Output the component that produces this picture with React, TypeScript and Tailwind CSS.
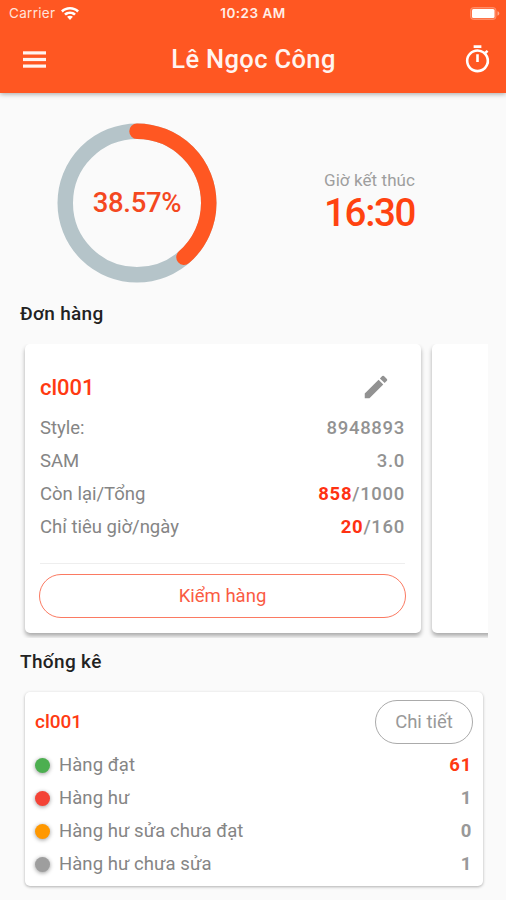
import React from "react";
import { MdOutlineTimer, MdEdit } from "react-icons/md";

interface FilaProps {
  label: string;
  children: React.ReactNode;
}

const Fila: React.FC<FilaProps> = ({ label, children }) => (
  <div className="flex h-[33px] items-center justify-between text-[18.5px]">
    <span className="text-[#858585]">{label}</span>
    <span className="font-medium tracking-[0.7px] text-[#929292]">{children}</span>
  </div>
);

const stats = [
  { label: "Hàng đạt", value: 61, dot: "bg-[#4caf50]", color: "text-[#ff3a12]" },
  { label: "Hàng hư", value: 1, dot: "bg-[#f44336]", color: "text-[#999999]" },
  { label: "Hàng hư sửa chưa đạt", value: 0, dot: "bg-[#ff9800]", color: "text-[#999999]" },
  { label: "Hàng hư chưa sửa", value: 1, dot: "bg-[#9e9e9e]", color: "text-[#999999]" },
];

const Progress: React.FC<{ percent: number }> = ({ percent }) => {
  const r = 71.75;
  const length = 2 * Math.PI * r;

  return (
    <div className="grid h-[160px] w-[160px] place-items-center">
      <svg viewBox="0 0 160 160" className="col-start-1 row-start-1 h-[160px] w-[160px] -rotate-90">
        <circle cx="80" cy="80" r={r} fill="none" stroke="#b5c4c9" strokeWidth="15.5" />
        <circle
          cx="80"
          cy="80"
          r={r}
          fill="none"
          stroke="#ff5722"
          strokeWidth="15.5"
          strokeLinecap="round"
          strokeDasharray={`${(length * percent) / 100} ${length}`}
        />
      </svg>
      <span className="col-start-1 row-start-1 text-[27.5px] font-medium tracking-[-0.3px] text-[#f4481f]">
        {percent}%
      </span>
    </div>
  );
};

const App: React.FC = () => {
  return (
    <div className="h-[900px] w-[506px] overflow-hidden bg-[#fafafa] font-['Roboto',sans-serif]">
      <header className="h-[93px] bg-[#ff5722] text-white shadow-[0_1px_5px_rgba(0,0,0,0.35)]">
        <div className="grid h-[27px] grid-cols-3 items-center pr-[6px] pl-[9px] font-['Inter',sans-serif] text-[13.5px]">
          <div className="flex items-center gap-[6px] text-[#ffe3da]">
            <span className="tracking-[0.3px]">Carrier</span>
            <svg viewBox="0 0 18 14" className="h-[14px] w-[18px]" fill="#fff">
              <path d="M9 0C5.5 0 2.300 1.300 0 3.500L1.800 5.400C3.700 3.600 6.200 2.600 9 2.600s5.300 1 7.200 2.800L18 3.500C15.700 1.300 12.500 0 9 0z" />
              <path d="M9 4.400c-2.300 0-4.400.9-5.900 2.300L4.900 8.500C6 7.500 7.400 6.900 9 6.900s3 .6 4.100 1.600l1.800-1.800C13.400 5.300 11.300 4.400 9 4.400z" />
              <path d="M9 8.700c-1.100 0-2.100.4-2.900 1.100L9 13l2.900-3.200C11.100 9.100 10.100 8.700 9 8.700z" />
            </svg>
          </div>
          <span className="pr-[3px] text-center font-semibold tracking-[0.5px] whitespace-nowrap text-[#ffeee8]">
            10:23 AM
          </span>
          <svg viewBox="0 0 30 13" className="h-[13px] w-[30px] justify-self-end">
            <rect x="0.5" y="0.5" width="25.500" height="12" rx="3" fill="#ff9d7e" fillOpacity="0.4" stroke="#ff9d7e" strokeOpacity="0.7" />
            <rect x="2" y="2" width="22.500" height="9" rx="1.500" fill="#fff" />
            <path d="M27.500 4.300c1.200.4 1.800 1.200 1.800 2.200s-.6 1.800-1.800 2.200z" fill="#ffab91" />
          </svg>
        </div>
        <div className="flex h-[65px] items-center justify-between pr-[13px] pl-[23px]">
          <svg viewBox="0 0 23 17" className="h-[17px] w-[23px]" fill="#fff4f0">
            <rect y="0.300" width="23" height="3.200" />
            <rect y="6.900" width="23" height="3.200" />
            <rect y="13.500" width="23" height="3.200" />
          </svg>
          <h1 className="ml-[4px] mr-[5px] text-[25.5px] font-medium tracking-[0.35px] text-[#fff4f0]">Lê Ngọc Công</h1>
          <MdOutlineTimer className="h-[31px] w-[31px]" />
        </div>
      </header>

      <section className="flex h-[205px] items-center pt-[15px] pl-[57px]">
        <Progress percent={38.57} />
        <div className="ml-[107px] flex flex-col items-start pb-[2px]">
          <span className="text-[17px] leading-[21px] tracking-[0.08px] text-[#9e9e9e]">Giờ kết thúc</span>
          <span className="text-[38.5px] leading-[43px] font-medium tracking-[-1.3px] text-[#ff4310]">16:30</span>
        </div>
      </section>

      <h2 className="h-[46px] pl-[20px] text-[19px] leading-[32px] font-medium tracking-[0.3px] text-[#222]">
        Đơn hàng
      </h2>
      <div className="flex h-[294px] w-[488px] gap-[11px] overflow-hidden pl-[25px]">
        <article className="h-[289px] w-[396px] shrink-0 rounded-[5px] bg-white pt-[22px] pr-[16px] pl-[15px] shadow-[0_3px_4px_rgba(0,0,0,0.32)]">
          <div className="flex h-[46px] items-start justify-between">
            <span className="text-[22px] leading-[43px] font-medium text-[#ff3a12]">cl001</span>
            <MdEdit className="mt-[6px] mr-[14px] h-[30px] w-[30px] text-[#929292]" />
          </div>
          <Fila label="Style:">8948893</Fila>
          <Fila label="SAM">3.0</Fila>
          <Fila label="Còn lại/Tổng">
            <span className="font-bold text-[#ff3212]">858</span>/1000
          </Fila>
          <Fila label="Chỉ tiêu giờ/ngày">
            <span className="font-bold text-[#ff3212]">20</span>/160
          </Fila>
          <div className="mt-[19px] mb-[10px] h-px bg-[#eeeeee]" />
          <button className="-ml-px h-[44px] w-[367px] rounded-full border border-[#fb7a62] pt-px text-[18.5px] text-[#fa5b43]">
            Kiểm hàng
          </button>
        </article>
        <article className="h-[289px] w-[396px] shrink-0 rounded-[5px] bg-white shadow-[0_3px_4px_rgba(0,0,0,0.32)]" />
      </div>

      <h2 className="h-[54px] pl-[20px] text-[19px] leading-[47px] font-medium tracking-[0.35px] text-[#222]">
        Thống kê
      </h2>
      <article className="mx-[25px] h-[194px] w-[458px] rounded-[5px] bg-white pr-[10px] pl-[10px] pt-[8px] shadow-[0_1px_3px_rgba(0,0,0,0.3)]">
        <div className="flex h-[49px] items-start justify-between">
          <span className="text-[19px] leading-[44px] font-medium text-[#ff3a12]">cl001</span>
          <button className="h-[44px] w-[98px] rounded-full border border-[#ababab] pt-px text-[18.500px] text-[#999]">
            Chi tiết
          </button>
        </div>
        {stats.map((s) => (
          <div key={s.label} className="flex h-[33px] items-center pr-px text-[18.5px]">
            <span className={`h-[15px] w-[15px] rounded-full shadow-[0_1px_4px_rgba(0,0,0,0.4)] ${s.dot}`} />
            <span className="ml-[9px] flex-1 pt-px tracking-[0.05px] text-[#858585]">{s.label}</span>
            <span className={`pt-px font-bold tracking-[0.75px] ${s.color}`}>{s.value}</span>
          </div>
        ))}
      </article>
    </div>
  );
};

export default App;
